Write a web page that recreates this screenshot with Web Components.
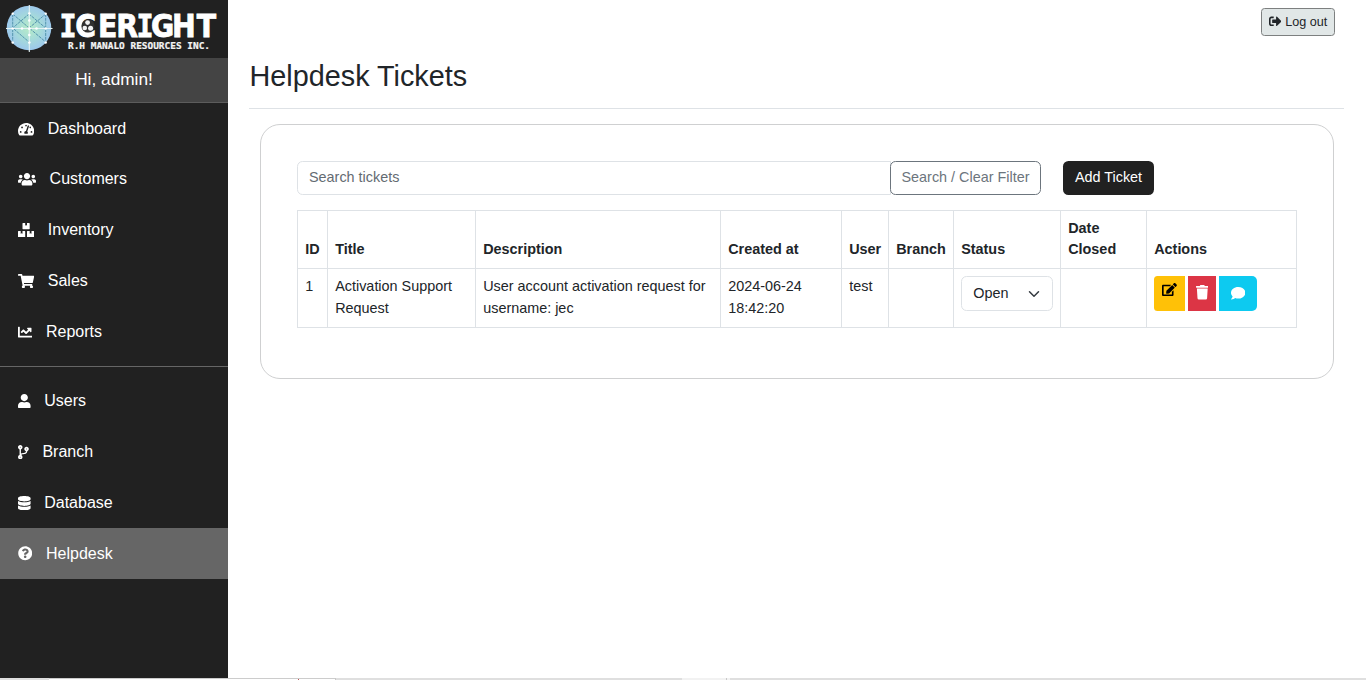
<!DOCTYPE html>
<html lang="en">
<head>
<meta charset="utf-8">
<title>Helpdesk Tickets</title>
<style>
html,body{margin:0;height:100%;overflow:hidden;background:#fff}
body{font-family:"Liberation Sans",Arial,sans-serif;font-size:14.4px;line-height:21.6px;color:#212529}
</style>
</head>
<body>
<help-app></help-app>
<script>
const ICONS={
gauge:[576,"M288 32C128.94 32 0 160.94 0 320c0 52.8 14.25 102.26 39.06 144.8 5.61 9.62 16.3 15.2 27.44 15.2h443c11.14 0 21.83-5.58 27.44-15.2C561.75 422.26 576 372.8 576 320c0-159.06-128.94-288-288-288zm0 64c14.71 0 26.58 10.13 30.32 23.65-1.11 2.26-2.64 4.23-3.45 6.67l-9.22 27.67c-5.13 3.49-10.97 6.01-17.64 6.01-17.67 0-32-14.33-32-32S270.33 96 288 96zM96 384c-17.67 0-32-14.33-32-32s14.33-32 32-32 32 14.33 32 32-14.33 32-32 32zm48-160c-17.67 0-32-14.33-32-32s14.33-32 32-32 32 14.33 32 32-14.33 32-32 32zm246.77-72.41l-61.33 184C343.13 347.33 352 364.54 352 384c0 11.72-3.38 22.55-8.88 32H232.88c-5.5-9.45-8.88-20.28-8.88-32 0-33.94 26.5-61.43 59.9-63.59l61.34-184.01c4.17-12.56 17.73-19.45 30.36-15.17 12.57 4.19 19.35 17.79 15.17 30.36zm14.66 57.2l15.52-46.55c3.47-1.29 7.13-2.23 11.05-2.23 17.67 0 32 14.33 32 32s-14.33 32-32 32c-11.38-.01-20.89-6.28-26.57-15.22zM480 384c-17.67 0-32-14.33-32-32s14.33-32 32-32 32 14.33 32 32-14.33 32-32 32z"],
users:[640,"M96 224c35.3 0 64-28.7 64-64s-28.7-64-64-64-64 28.7-64 64 28.7 64 64 64zm448 0c35.3 0 64-28.7 64-64s-28.7-64-64-64-64 28.7-64 64 28.7 64 64 64zm32 32h-64c-17.6 0-33.5 7.1-45.1 18.6 40.3 22.1 68.9 62 75.1 109.4h66c17.7 0 32-14.3 32-32v-32c0-35.3-28.7-64-64-64zm-256 0c61.9 0 112-50.1 112-112S381.9 32 320 32 208 82.1 208 144s50.1 112 112 112zm76.8 32h-8.3c-20.8 10-43.9 16-68.5 16s-47.6-6-68.5-16h-8.3C179.6 288 128 339.6 128 403.2V432c0 26.5 21.5 48 48 48h288c26.5 0 48-21.5 48-48v-28.8c0-63.6-51.6-115.2-115.2-115.2zm-223.7-13.4C161.5 263.1 145.6 256 128 256H64c-35.3 0-64 28.7-64 64v32c0 17.7 14.3 32 32 32h65.9c6.3-47.4 34.9-87.3 75.2-109.4z"],
boxes:[576,"M560 288h-80v96l-32-21.3-32 21.3v-96h-80c-8.8 0-16 7.2-16 16v192c0 8.8 7.2 16 16 16h224c8.8 0 16-7.2 16-16V304c0-8.8-7.2-16-16-16zm-384-64h224c8.8 0 16-7.2 16-16V16c0-8.8-7.2-16-16-16h-80v96l-32-21.3L256 96V0h-80c-8.8 0-16 7.2-16 16v192c0 8.8 7.2 16 16 16zm64 64h-80v96l-32-21.3L96 384v-96H16c-8.8 0-16 7.2-16 16v192c0 8.8 7.2 16 16 16h224c8.8 0 16-7.2 16-16V304c0-8.8-7.2-16-16-16z"],
cart:[576,"M528.12 301.319l47.273-208C578.806 78.301 567.391 64 551.99 64H159.208l-9.166-44.81C147.758 8.021 137.93 0 126.529 0H24C10.745 0 0 10.745 0 24v16c0 13.255 10.745 24 24 24h69.883l70.248 343.435C147.325 417.1 136 435.222 136 456c0 30.928 25.072 56 56 56s56-25.072 56-56c0-15.674-6.447-29.835-16.824-40h209.647C430.447 426.165 424 440.326 424 456c0 30.928 25.072 56 56 56s56-25.072 56-56c0-22.172-12.888-41.332-31.579-50.405l5.517-24.276c3.413-15.018-8.002-29.319-23.403-29.319H218.117l-6.545-32h293.145c11.206 0 20.92-7.754 23.403-18.681z"],
chart:[512,"M496 384H64V80c0-8.84-7.16-16-16-16H16C7.16 64 0 71.16 0 80v336c0 17.67 14.33 32 32 32h464c8.84 0 16-7.16 16-16v-32c0-8.84-7.16-16-16-16zM464 96H345.94c-21.38 0-32.09 25.85-16.97 40.97l32.4 32.4L288 242.75l-73.37-73.37c-12.5-12.5-32.76-12.5-45.25 0l-68.69 68.69c-6.25 6.25-6.25 16.38 0 22.63l22.62 22.62c6.25 6.25 16.38 6.25 22.63 0L192 237.25l73.37 73.37c12.5 12.5 32.76 12.5 45.25 0l96-96 32.4 32.4c15.12 15.12 40.97 4.41 40.97-16.97V112c.01-8.84-7.15-16-15.99-16z"],
user:[448,"M224 256c70.7 0 128-57.3 128-128S294.7 0 224 0 96 57.3 96 128s57.3 128 128 128zm89.6 32h-16.7c-22.2 10.2-46.9 16-72.9 16s-50.6-5.8-72.9-16h-16.7C60.2 288 0 348.2 0 422.4V464c0 26.5 21.5 48 48 48h352c26.5 0 48-21.5 48-48v-41.6c0-74.2-60.2-134.4-134.4-134.4z"],
branch:[384,"M384 144c0-44.2-35.8-80-80-80s-80 35.8-80 80c0 36.4 24.3 67.1 57.5 76.8-.6 16.1-4.2 28.5-11 36.9-15.4 19.2-49.3 22.4-85.2 25.7-28.2 2.6-57.4 5.4-81.3 16.9v-144c32.5-10.2 56-40.5 56-76.3 0-44.2-35.8-80-80-80S0 35.8 0 80c0 35.8 23.5 66.1 56 76.3v199.3C23.5 365.9 0 396.2 0 432c0 44.2 35.8 80 80 80s80-35.8 80-80c0-34-21.2-63.1-51.2-74.6 3.1-5.2 7.8-9.8 14.9-13.4 16.2-8.2 40.4-10.4 66.1-12.8 42.2-3.9 90-8.4 118.2-43.4 14-17.4 21.1-39.8 21.6-67.9 31.6-10.8 54.4-40.7 54.4-75.9zM80 64c8.8 0 16 7.2 16 16s-7.2 16-16 16-16-7.2-16-16 7.2-16 16-16zm0 384c-8.8 0-16-7.2-16-16s7.2-16 16-16 16 7.2 16 16-7.2 16-16 16zm224-320c8.8 0 16 7.2 16 16s-7.2 16-16 16-16-7.2-16-16 7.2-16 16-16z"],
database:[448,"M448 73.143v45.714C448 159.143 347.667 192 224 192S0 159.143 0 118.857V73.143C0 32.857 100.333 0 224 0s224 32.857 224 73.143zM448 176v102.857C448 319.143 347.667 352 224 352S0 319.143 0 278.857V176c48.125 33.143 136.208 48.572 224 48.572S399.874 209.143 448 176zm0 160v102.857C448 479.143 347.667 512 224 512S0 479.143 0 438.857V336c48.125 33.143 136.208 48.572 224 48.572S399.874 369.143 448 336z"],
help:[512,"M504 256c0 136.997-111.043 248-248 248S8 392.997 8 256C8 119.083 119.043 8 256 8s248 111.083 248 248zM262.655 90c-54.497 0-89.255 22.957-116.549 63.758-3.536 5.286-2.353 12.415 2.715 16.258l34.699 26.31c5.205 3.947 12.621 3.008 16.665-2.122 17.864-22.658 30.113-35.797 57.303-35.797 20.429 0 45.698 13.148 45.698 32.958 0 14.976-12.363 22.667-32.534 33.976C247.128 238.528 216 254.941 216 296v4c0 6.627 5.373 12 12 12h56c6.627 0 12-5.373 12-12v-1.333c0-28.462 83.186-29.647 83.186-106.667 0-58.002-60.165-102-116.531-102zM256 338c-25.365 0-46 20.635-46 46 0 25.364 20.635 46 46 46s46-20.636 46-46c0-25.365-20.635-46-46-46z"],
logout:[512,"M497 273L329 441c-15 15-41 4.5-41-17v-96H152c-13.3 0-24-10.7-24-24v-96c0-13.3 10.7-24 24-24h136V88c0-21.4 25.9-32 41-17l168 168c9.3 9.4 9.3 24.6 0 34zM192 436v-40c0-6.6-5.4-12-12-12H96c-17.7 0-32-14.3-32-32V160c0-17.7 14.3-32 32-32h84c6.6 0 12-5.4 12-12V76c0-6.6-5.4-12-12-12H96c-53 0-96 43-96 96v192c0 53 43 96 96 96h84c6.6 0 12-5.4 12-12z"],
edit:[576,"M402.6 83.2l90.2 90.2c3.8 3.8 3.8 10 0 13.8L274.4 405.6l-92.8 10.3c-12.4 1.4-22.9-9.1-21.5-21.5l10.3-92.8L388.8 83.2c3.8-3.8 10-3.8 13.8 0zm162-22.9l-48.8-48.8c-15.2-15.2-39.9-15.2-55.2 0l-35.4 35.4c-3.8 3.8-3.8 10 0 13.8l90.2 90.2c3.8 3.8 10 3.8 13.8 0l35.4-35.4c15.2-15.3 15.2-40 0-55.2zM384 346.2V448H64V128h229.8c3.2 0 6.2-1.3 8.5-3.5l40-40c7.6-7.6 2.2-20.5-8.5-20.5H48C21.5 64 0 85.5 0 112v352c0 26.5 21.5 48 48 48h352c26.5 0 48-21.5 48-48V306.2c0-10.7-12.9-16-20.5-8.5l-40 40c-2.2 2.3-3.5 5.3-3.5 8.5z"],
trash:[448,"M432 32H312l-9.4-18.7A24 24 0 0 0 281.1 0H166.8a23.72 23.72 0 0 0-21.4 13.3L136 32H16A16 16 0 0 0 0 48v32a16 16 0 0 0 16 16h416a16 16 0 0 0 16-16V48a16 16 0 0 0-16-16zM53.2 467a48 48 0 0 0 47.9 45h245.8a48 48 0 0 0 47.9-45L416 128H32z"],
comment:[512,"M256 32C114.6 32 0 125.1 0 240c0 49.6 21.4 95 57 130.7C44.5 421.1 2.7 466 2.2 466.5c-2.2 2.3-2.8 5.7-1.5 8.7S4.8 480 8 480c66.3 0 116-31.8 140.6-51.4 32.7 12.3 69 19.4 107.4 19.4 141.4 0 256-93.1 256-208S397.4 32 256 32z"]
};
const define=(name,html)=>customElements.define(name,class extends HTMLElement{
  constructor(){super();this.attachShadow({mode:"open"}).innerHTML=typeof html==="string"?html:"";}
  connectedCallback(){if(typeof html==="function")this.shadowRoot.innerHTML=html(this);}
});

define("fa-icon",el=>{
  const [w,d]=ICONS[el.getAttribute("name")];
  return `<style>:host{display:inline-flex;flex:none;height:1em;width:${w/512}em}svg{width:100%;height:100%;display:block}</style>
  <svg viewBox="0 0 ${w} 512"><path fill="currentColor" d="${d}"/></svg>`;
});

define("brand-logo",`<style>:host{display:block;height:58px;background:#212121}svg{display:block}</style>
<svg width="228" height="58" viewBox="0 0 228 58">
<defs><radialGradient id="g"><stop offset="0" stop-color="#b8ecc8"/><stop offset=".5" stop-color="#a6dcd8"/><stop offset="1" stop-color="#9cc8ec"/></radialGradient></defs>
<circle cx="29" cy="28" r="22.3" fill="url(#g)"/>
<path d="M12.7 14V42M45.7 14V42M12.7 14L45.7 42M45.7 14L29 28M29 14L12.7 28L29 42M29 14L45.7 28" fill="none" stroke="#5494ae" stroke-width="1" stroke-dasharray="3 .8"/>
<path d="M29.3 5V52M6 28.5H52.5" stroke="#e5f3f4" stroke-width="1.1"/>
<g fill="#fff"><circle cx="12.7" cy="13.7" r="1.2"/><circle cx="45.7" cy="13.7" r="1.2"/><circle cx="12.7" cy="42.5" r="1.2"/><circle cx="45.7" cy="42.5" r="1.2"/><circle cx="29.3" cy="13.5" r="1.3"/><circle cx="29.3" cy="42.5" r="1.3"/><circle cx="29.3" cy="20.5" r="1.3"/><circle cx="29.3" cy="35" r="1.3"/><circle cx="22" cy="28.5" r="1.3"/><circle cx="36.5" cy="28.5" r="1.3"/><circle cx="29.3" cy="28.5" r="1.5"/><circle cx="12.7" cy="28.5" r="1.2"/><circle cx="45.7" cy="28.5" r="1.2"/></g>
<text transform="translate(0 36.5) scale(.9 1)" fill="#fff" stroke="#fff" stroke-width=".8" font-family="'DejaVu Sans'" font-weight="700" font-size="31.5"><tspan font-family="'DejaVu Sans Mono'" x="66.2">I</tspan><tspan x="83.5 108.8 129.3">CER</tspan><tspan font-family="'DejaVu Sans Mono'" x="151.6">I</tspan><tspan x="167.8 191 218.6">GHT</tspan></text>
<circle cx="88" cy="26" r="6.6" fill="#303030"/><g fill="#f2f2f2"><circle cx="87.6" cy="22.6" r="2.4"/><circle cx="84.8" cy="28" r="2.3"/><circle cx="90.6" cy="28.2" r="2.5"/></g>
<text x="68" y="49" fill="#f4f4f4" stroke="#f4f4f4" stroke-width=".2" font-family="'DejaVu Sans Mono'" font-weight="700" font-size="8.6" textLength="142" lengthAdjust="spacingAndGlyphs">R.H MANALO RESOURCES INC.</text>
</svg>`);

define("nav-item",el=>`<style>
:host{display:flex;align-items:center;height:50.8px;padding-left:18px;gap:13.6px;color:#fff;font-size:16px;box-sizing:border-box}
:host([active]){background:#666}
fa-icon{font-size:14.4px;margin-top:.6px}
</style><fa-icon name="${el.getAttribute("icon")}"></fa-icon><span><slot></slot></span>`);

define("side-bar",`<style>
:host{display:flex;flex-direction:column;width:228px;background:#212121;color:#fff}
.hi{height:44px;line-height:43px;text-align:center;background:#444;border-bottom:1px solid #5c5c5c;font-size:17.28px}
.line{height:1px;background:#666;margin:9px 0 8.6px}
</style>
<brand-logo></brand-logo>
<div class="hi">Hi, admin!</div>
<nav>
<nav-item icon="gauge">Dashboard</nav-item><nav-item icon="users">Customers</nav-item><nav-item icon="boxes">Inventory</nav-item><nav-item icon="cart">Sales</nav-item><nav-item icon="chart">Reports</nav-item>
<div class="line"></div>
<nav-item icon="user">Users</nav-item><nav-item icon="branch">Branch</nav-item><nav-item icon="database">Database</nav-item><nav-item icon="help" active>Helpdesk</nav-item>
</nav>`);

define("log-out",`<style>:host{display:flex;align-items:center;justify-content:center;box-sizing:border-box;width:74px;height:28px;gap:4px;border:1px solid #7d8080;border-radius:3.5px;background:#e1e7e7;font-size:12.6px;color:#212529}span{padding-top:1px}fa-icon{margin-bottom:1px}</style><fa-icon name="logout"></fa-icon><span>Log out</span>`);

define("search-bar",`<style>
:host{display:flex;height:34px}
div{box-sizing:border-box;height:34px;line-height:31px;border-radius:5.5px;white-space:nowrap}
.field{width:594px;border:1px solid #dee2e6;border-radius:5.5px 0 0 5.5px;padding-left:11px;color:#646b72}
.filter{width:151px;margin-left:-1px;border:1px solid #6c757d;color:#6c757d;text-align:center;background:#fff}
.add{width:91px;margin-left:22px;background:#212121;color:#fff;text-align:center;line-height:33px}
</style><div class="field">Search tickets</div><div class="filter">Search / Clear Filter</div><div class="add">Add Ticket</div>`);

define("status-select",`<style>:host{display:flex;align-items:center;justify-content:space-between;box-sizing:border-box;width:92px;height:35px;border:1px solid #dee2e6;border-radius:5.5px;padding:0 12px 0 11px}svg{display:block}</style>
<slot></slot><svg width="12" height="12" viewBox="0 0 16 16"><path fill="none" stroke="#343a40" stroke-linecap="round" stroke-linejoin="round" stroke-width="2" d="m2 5 6 6 6-6"/></svg>`);

define("row-actions",`<style>:host{display:flex;gap:3px;height:35px}
span{display:flex;justify-content:center;align-items:center;height:35px}
.e{width:31px;background:#ffc107;color:#000;border-radius:3.5px 0 0 3.5px}.e fa-icon{margin-bottom:8px;font-size:13.2px}
.d{width:28px;background:#dc3545;color:#fff}.d fa-icon{margin-bottom:2px}
.c{width:38px;background:#0dcaf0;color:#fff;border-radius:0 5px 5px 0}.c fa-icon{margin-bottom:1px}
</style><span class="e"><fa-icon name="edit"></fa-icon></span><span class="d"><fa-icon name="trash"></fa-icon></span><span class="c"><fa-icon name="comment"></fa-icon></span>`);

define("ticket-table",`<style>
:host{display:grid;grid-template-columns:30px 148px 245px 121px 47px 65px 107px 86px 150px;grid-template-rows:58px 59px;width:1000px;box-sizing:border-box;border-right:1px solid #dee2e6;border-bottom:1px solid #dee2e6}
div{box-sizing:border-box;border-left:1px solid #dee2e6;border-top:1px solid #dee2e6;padding:7px 0 7px 7.2px;min-width:0}
.h{font-weight:700;display:flex;align-items:flex-end;padding-bottom:7px}
</style>
<div class="h">ID</div><div class="h">Title</div><div class="h">Description</div><div class="h">Created at</div><div class="h">User</div><div class="h">Branch</div><div class="h">Status</div><div class="h">Date<br>Closed</div><div class="h">Actions</div>
<div>1</div><div>Activation Support<br>Request</div><div>User account activation request for<br>username: jec</div><div>2024-06-24<br>18:42:20</div><div>test</div><div></div><div><status-select>Open</status-select></div><div></div><div><row-actions></row-actions></div>`);

define("ticket-card",`<style>:host{display:block;box-sizing:border-box;width:1074px;height:255px;border:1px solid #cfd0d1;border-radius:20px;padding:36px}search-bar{margin-bottom:15px}</style><search-bar></search-bar><ticket-table></ticket-table>`);

define("bottom-edge",`<style>:host{display:grid;grid-template-columns:49px 249px 1px 36px 1px 346px 44px 1px 3px 1fr;height:2px;background:#dfdfdf}
i{display:block}.w{background:linear-gradient(#ccc 50%,#fff 50%)}.r{background:linear-gradient(#ccc 50%,#b55 50%)}.g{background:#c8c8c8}.l{background:#f2f2f2}</style>
<i></i><i class="w"></i><i class="r"></i><i class="w"></i><i class="g"></i><i></i><i class="l"></i><i class="g"></i><i class="l"></i><i></i>`);

define("help-app",`<style>
:host{display:grid;grid-template:678px 2px/228px 1fr;height:680px}
main{display:flex;flex-direction:column;padding:8px 22px 0 21px}
log-out{align-self:flex-end;margin-right:9px}
h1{margin:23px 0 0;font-weight:400;font-size:28.8px;line-height:34.6px;height:49px;border-bottom:1px solid #dee2e6;text-indent:.5px}
ticket-card{margin:15px 0 0 11px}
bottom-edge{grid-column:1/-1}
</style><side-bar></side-bar><main><log-out></log-out><h1>Helpdesk Tickets</h1><ticket-card></ticket-card></main><bottom-edge></bottom-edge>`);
</script>
</body>
</html>
